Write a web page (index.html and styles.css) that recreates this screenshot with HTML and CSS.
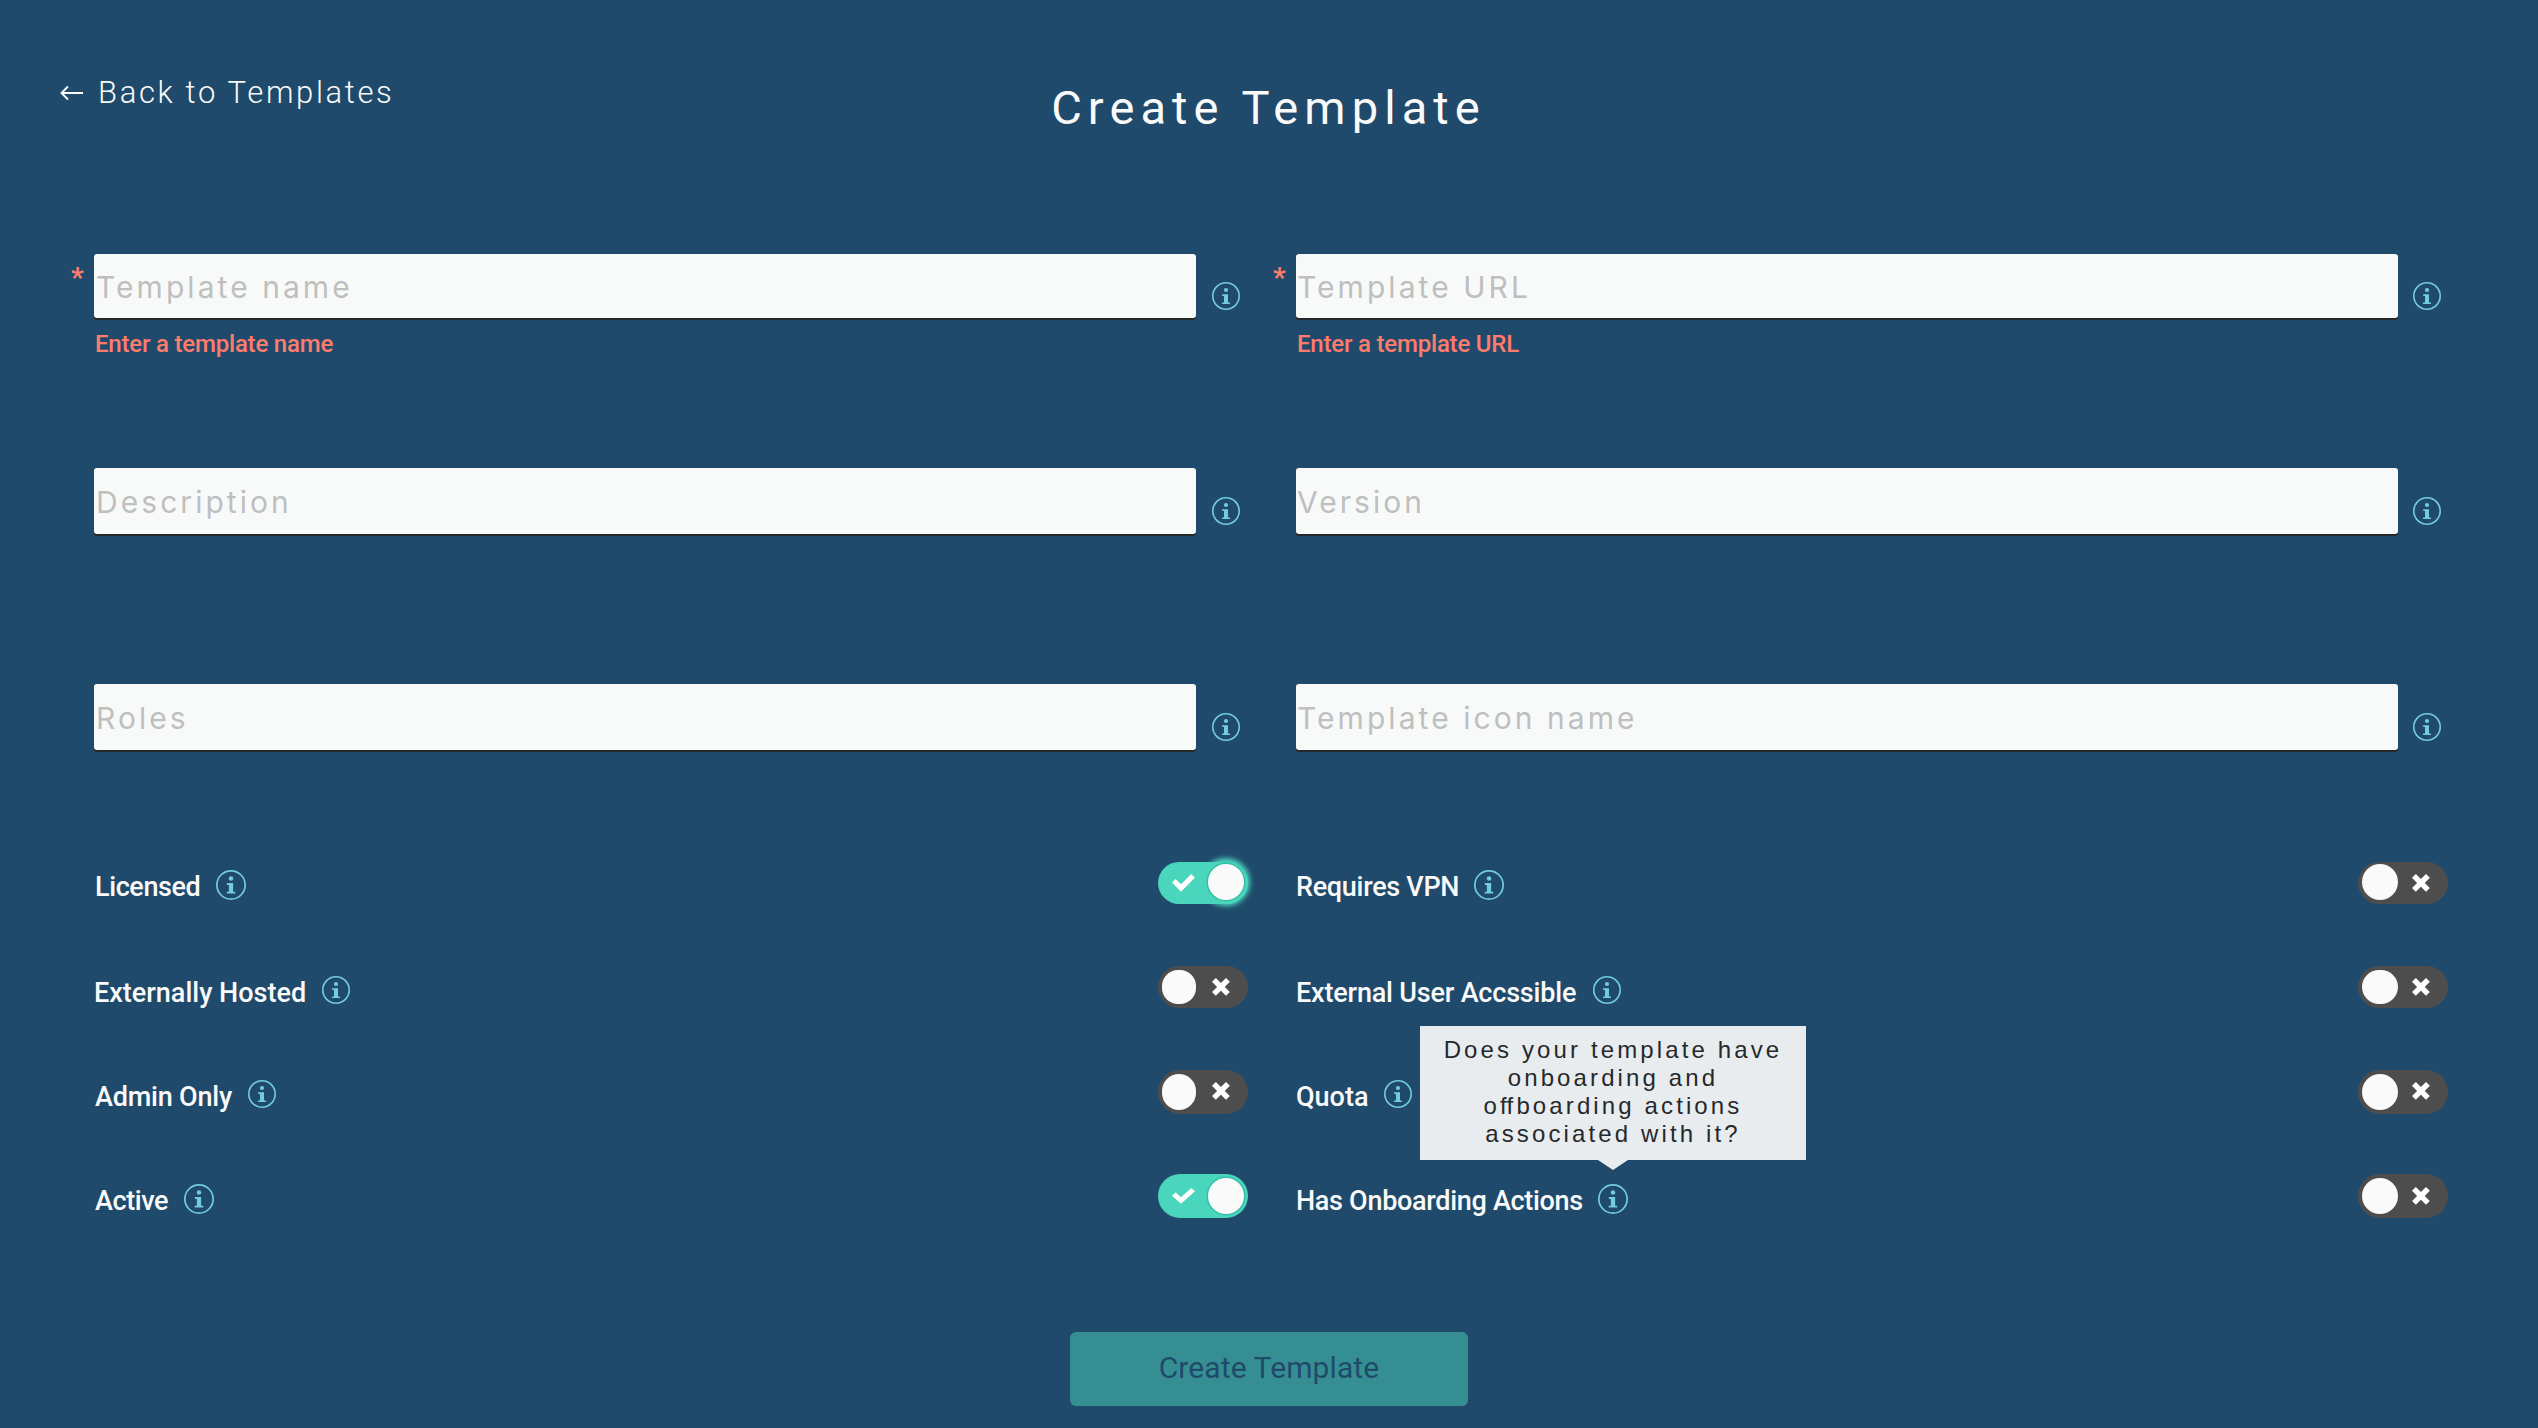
FILE: index.html
```
<!DOCTYPE html>
<html lang="en">
<head>
<meta charset="utf-8">
<title>Create Template</title>
<link rel="stylesheet" href="styles.css">
</head>
<body>
<svg class="sprite" aria-hidden="true">
  <symbol id="info" viewBox="0 0 28 28">
    <circle cx="14" cy="14" r="13.2" fill="none" stroke="currentColor" stroke-width="1.6"/>
    <circle cx="14" cy="8" r="2.1" fill="currentColor"/>
    <path fill="currentColor" d="M10.2 12.2H16V20.4H18V22H10V20.4H12V13.9H10.2z"/>
  </symbol>
  <symbol id="check" viewBox="0 0 14 11" preserveAspectRatio="none">
    <path fill="#fff" d="M11.264 0L5.26 6.004 2.103 2.847 0 4.95l5.26 5.26 8.108-8.107L11.264 0"/>
  </symbol>
  <symbol id="cross" viewBox="0 0 10 10">
    <path fill="#fff" d="M9.9 2.12L7.78 0 4.95 2.828 2.12 0 0 2.12l2.83 2.83L0 7.776 2.123 9.9 4.95 7.07 7.78 9.9 9.9 7.776 7.072 4.95 9.9 2.12"/>
  </symbol>
</svg>

<header class="header">
  <a class="back">
    <svg class="back-arrow" viewBox="0 0 24 16"><path d="M1.5 8H23M8 1.5L1.5 8L8 14.5" fill="none" stroke="currentColor" stroke-width="1.9"/></svg>
    <span>Back to Templates</span>
  </a>
  <h1 class="title">Create Template</h1>
</header>

<main>
  <section class="fields">
    <div class="field">
      <span class="required">*</span>
      <input class="input" placeholder="Template name">
      <svg class="info"><use href="#info"/></svg>
      <span class="error">Enter a template name</span>
    </div>
    <div class="field">
      <span class="required">*</span>
      <input class="input input-flush" placeholder="Template URL">
      <svg class="info"><use href="#info"/></svg>
      <span class="error">Enter a template URL</span>
    </div>
    <div class="field field-tall">
      <input class="input" placeholder="Description">
      <svg class="info"><use href="#info"/></svg>
    </div>
    <div class="field field-tall">
      <input class="input input-flush" placeholder="Version">
      <svg class="info"><use href="#info"/></svg>
    </div>
    <div class="field field-tall">
      <input class="input" placeholder="Roles">
      <svg class="info"><use href="#info"/></svg>
    </div>
    <div class="field field-tall">
      <input class="input input-flush" placeholder="Template icon name">
      <svg class="info"><use href="#info"/></svg>
    </div>
  </section>

  <section class="options">
    <div class="option option-first">
      <span class="label label-tight label-left">Licensed</span>
      <svg class="info info-large"><use href="#info"/></svg>
      <span class="toggle toggle-on toggle-focus"><svg class="check"><use href="#check"/></svg><span class="thumb"></span></span>
    </div>
    <div class="option option-first">
      <span class="label label-snug">Requires VPN</span>
      <svg class="info info-large info-near"><use href="#info"/></svg>
      <span class="toggle"><span class="thumb"></span><svg class="cross"><use href="#cross"/></svg></span>
    </div>

    <div class="option">
      <span class="label label-loose">Externally Hosted</span>
      <svg class="info"><use href="#info"/></svg>
      <span class="toggle"><span class="thumb thumb-square"></span><svg class="cross"><use href="#cross"/></svg></span>
    </div>
    <div class="option">
      <span class="label">External User Accssible</span>
      <svg class="info info-far"><use href="#info"/></svg>
      <span class="toggle"><span class="thumb thumb-flat"></span><svg class="cross"><use href="#cross"/></svg></span>
    </div>

    <div class="option">
      <span class="label label-left">Admin Only</span>
      <svg class="info"><use href="#info"/></svg>
      <span class="toggle toggle-tall"><span class="thumb thumb-narrow"></span><svg class="cross"><use href="#cross"/></svg></span>
    </div>
    <div class="option">
      <span class="label label-loose">Quota</span>
      <svg class="info"><use href="#info"/></svg>
      <span class="toggle toggle-tall"><span class="thumb"></span><svg class="cross"><use href="#cross"/></svg></span>
    </div>

    <div class="option option-last">
      <span class="label label-tight label-left">Active</span>
      <svg class="info info-large"><use href="#info"/></svg>
      <span class="toggle toggle-on toggle-tall"><svg class="check check-short"><use href="#check"/></svg><span class="thumb"></span></span>
    </div>
    <div class="option option-last">
      <span class="label label-snug">Has Onboarding Actions</span>
      <span class="hint">
        <svg class="info info-large"><use href="#info"/></svg>
        <span class="tooltip">Does your template have<br>onboarding and<br>o<span class="ligature">f</span>fboarding actions<br>associated with it?</span>
      </span>
      <span class="toggle toggle-tall"><span class="thumb"></span><svg class="cross"><use href="#cross"/></svg></span>
    </div>
  </section>

  <div class="actions">
    <button class="submit" disabled>Create Template</button>
  </div>
</main>
</body>
</html>
```
FILE: styles.css
```
* { box-sizing: border-box; }

body {
  margin: 0;
  height: 1428px;
  overflow: hidden;
  background: #204a6b;
  color: #fafafa;
  font-family: Roboto, "Liberation Sans", sans-serif;
}

.sprite { display: none; }

.header {
  display: grid;
  grid-template-columns: 1fr auto 1fr;
  align-items: start;
  height: 254px;
  padding: 68px 61px 0 60px;
}

.back {
  display: flex;
  align-items: center;
  gap: 14px;
  height: 50px;
  font-size: 31px;
  font-weight: 300;
  line-height: 50px;
  letter-spacing: 2.65px;
}

.back-arrow { width: 24px; height: 16px; }

.title {
  margin: 8px 0 0;
  font-size: 47px;
  font-weight: 400;
  line-height: 64px;
  letter-spacing: 6.1px;
}

.fields {
  display: grid;
  grid-template-columns: 1170px 1170px;
  grid-template-rows: 214px 216px 178px;
  column-gap: 32px;
  padding-left: 70px;
}

.field {
  display: grid;
  grid-template-columns: 24px 1102px 44px;
  grid-template-rows: 64px auto;
  align-content: start;
}

.field-tall { grid-template-rows: 66px; }

.required {
  grid-column: 1;
  padding-left: 1px;
  color: #ff7b6b;
  font-size: 28px;
  font-weight: 700;
  line-height: 48px;
}

.input {
  grid-column: 2;
  width: 1102px;
  height: 100%;
  margin: 0;
  padding: 1px 2px 0;
  border: 0;
  border-radius: 3px;
  background: #f8faf9;
  box-shadow: 0 2px 0 #26292b;
  font-family: Inter, "Liberation Sans", sans-serif;
  font-size: 30px;
  letter-spacing: 3.05px;
}

.input-flush { padding-left: 1px; }

.input::placeholder { color: #bfbfbf; opacity: 1; }

.field .info {
  grid-column: 3;
  margin: 28px 0 0 16px;
}

.field:nth-child(even) .info { margin-left: 15px; }

.field-tall .info { margin-top: 29px; }

.error {
  grid-column: 2;
  padding: 8px 0 0 1px;
  color: #ff7b6b;
  font-size: 24px;
  font-weight: 500;
  line-height: 36px;
  letter-spacing: -0.2px;
}

.info {
  flex: none;
  width: 28px;
  height: 28px;
  color: #73cbe0;
}

.info-large { width: 30px; height: 30px; }

.options {
  display: grid;
  grid-template-columns: 1154px 1152px;
  grid-auto-rows: 104px;
  column-gap: 48px;
  padding-left: 94px;
}

.option {
  display: flex;
  align-items: flex-start;
}

.label {
  margin-top: 5px;
  font-size: 27px;
  font-weight: 500;
  line-height: 44px;
  letter-spacing: -0.19px;
}

.label-left { padding-left: 1px; }
.label-tight { letter-spacing: -0.4px; }
.label-snug { letter-spacing: -0.3px; }
.label-loose { letter-spacing: 0; }

.option .info { margin: 10px 0 0 16px; }
.option .info-near { margin-left: 15px; }
.option .info-far { margin-left: 17px; }

.option-first .label { margin-top: 3px; }
.option.option-first .info { margin-top: 8px; }

.option .hint {
  position: relative;
  display: flex;
  margin: 10px 0 0 15px;
}

.option .hint .info { margin: 0; }

.tooltip {
  position: absolute;
  bottom: calc(100% + 24px);
  left: 50%;
  width: 386px;
  height: 134px;
  padding-top: 10px;
  transform: translateX(-50%);
  background: #e8ecef;
  color: #26292b;
  font-family: "Liberation Sans", Arial, sans-serif;
  font-size: 24px;
  line-height: 28px;
  letter-spacing: 3.12px;
  text-align: center;
  white-space: nowrap;
}

.tooltip::after {
  content: "";
  position: absolute;
  top: 100%;
  left: 50%;
  margin-left: -15px;
  border: 15px solid transparent;
  border-top: 10px solid #e8ecef;
  border-bottom: 0;
}

.ligature { letter-spacing: 0; }

.toggle {
  display: flex;
  align-items: center;
  width: 90px;
  height: 42px;
  margin-left: auto;
  padding: 0 14px 0 4px;
  border-radius: 22px;
  background: #4d4d4d;
}

.toggle-tall { height: 44px; }

.toggle-on {
  padding: 0 4px 0 14px;
  background: #4ad6bd;
}

.thumb {
  width: 36px;
  height: 36px;
  border-radius: 50%;
  background: #fafafa;
}

.toggle:not(.toggle-tall) .thumb { margin-bottom: 2px; }
.toggle:not(.toggle-tall) .thumb-flat,
.toggle:not(.toggle-tall) .thumb-square { height: 34px; margin-bottom: 0; }
.thumb-square { width: 34px; border-radius: 16px; }
.thumb-flat { border-radius: 17px; }
.thumb-narrow { width: 34px; border-radius: 17px; }

.toggle-on .thumb {
  margin-left: auto;
  margin-right: 0;
  box-shadow: 0 0 0 1.5px #34bfa6;
}

.toggle-focus .thumb { box-shadow: 0 0 0 1.5px #34bfa6, 0 0 5px 6px #4ad6bd; }

.check { width: 24px; height: 19px; }
.check-short { height: 17px; margin-bottom: 0; }
.cross { width: 18px; height: 18px; margin-left: auto; margin-right: 4px; }
.toggle-tall .cross { margin-bottom: 2px; }
.option-last .toggle-tall .cross { margin-bottom: 0; }

.actions {
  display: flex;
  justify-content: center;
  padding-top: 54px;
}

.submit {
  width: 398px;
  height: 74px;
  padding: 0 0 4px;
  border: 0;
  border-radius: 6px;
  background: #358f92;
  color: #204a6b;
  font-family: Roboto, "Liberation Sans", sans-serif;
  font-size: 30px;
  letter-spacing: 0.1px;
}
```
